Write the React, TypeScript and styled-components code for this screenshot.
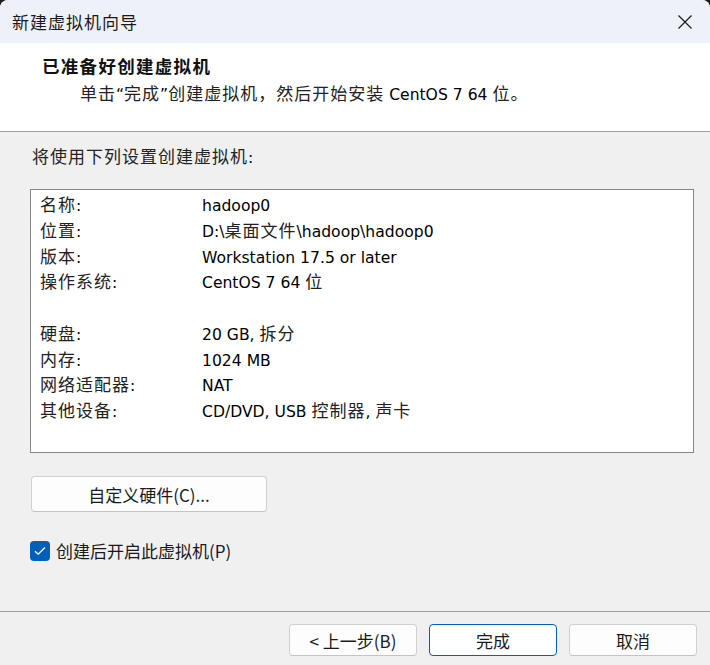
import styled, { createGlobalStyle } from 'styled-components';

const GlobalStyle = createGlobalStyle`
  html, body {
    margin: 0;
    padding: 0;
    background: #1c1c1c;
  }
  * {
    box-sizing: border-box;
  }
`;

const latin = `"DejaVu Sans", "Noto Sans CJK SC", sans-serif`;
const uiFont = `"Noto Sans CJK SC", "Noto Sans", sans-serif`;

const cjkRun = /([\u2E80-\u9FFF\u3000-\u303F\uFF00-\uFFEF]+)/;

// windows renders the CJK parts larger than the tahoma parts, so split them
function Mixed({ text }: { text: string }) {
  return (
    <>
      {text.split(cjkRun).map((part, i) =>
        cjkRun.test(part) ? <Han key={i}>{part}</Han> : part
      )}
    </>
  );
}

const settings: Array<[string, string] | null> = [
  ['名称:', 'hadoop0'],
  ['位置:', 'D:\\桌面文件\\hadoop\\hadoop0'],
  ['版本:', 'Workstation 17.5 or later'],
  ['操作系统:', 'CentOS 7 64 位'],
  null,
  ['硬盘:', '20 GB, 拆分'],
  ['内存:', '1024 MB'],
  ['网络适配器:', 'NAT'],
  ['其他设备:', 'CD/DVD, USB 控制器, 声卡'],
];

export default function App() {
  return (
    <>
      <GlobalStyle />
      <Window>
        <TitleBar>
          <Title>新建虚拟机向导</Title>
          <CloseButton aria-label="关闭">
            <svg width="16" height="16" viewBox="0 0 16 16">
              <path d="M1.5 1.5 L14.5 14.5 M14.5 1.5 L1.5 14.5" stroke="#1b1b1b" strokeWidth="1.2" fill="none" />
            </svg>
          </CloseButton>
        </TitleBar>

        <Header>
          <HeaderTitle>已准备好创建虚拟机</HeaderTitle>
          <HeaderText>
            <Mixed text="单击“完成”创建虚拟机，然后开始安装 CentOS 7 64 位。" />
          </HeaderText>
        </Header>

        <Content>
          <Intro>
            <Mixed text="将使用下列设置创建虚拟机:" />
          </Intro>

          <ListBox>
            {settings.map((row, i) =>
              row ? (
                <Row key={i}>
                  <Label><Mixed text={row[0]} /></Label>
                  <Value><Mixed text={row[1]} /></Value>
                </Row>
              ) : (
                <Row key={i} />
              )
            )}
          </ListBox>

          <HardwareButton>自定义硬件(C)...</HardwareButton>

          <CheckRow>
            <CheckBox>
              <svg width="12" height="10" viewBox="0 0 12 10">
                <path d="M1 5.2 L4.2 8.2 L11 1.5" stroke="#fff" strokeWidth="1.3" fill="none" />
              </svg>
            </CheckBox>
            <CheckLabel>创建后开启此虚拟机(P)</CheckLabel>
          </CheckRow>
        </Content>

        <Footer>
          <DialogButton>&lt; 上一步(B)</DialogButton>
          <DialogButton $primary>完成</DialogButton>
          <DialogButton>取消</DialogButton>
        </Footer>
      </Window>
    </>
  );
}

const Window = styled.div`
  width: 710px;
  height: 665px;
  background: #f0f0f0;
  border-radius: 8px 8px 0 0;
  overflow: hidden;
  display: flex;
  flex-direction: column;
`;

const TitleBar = styled.div`
  height: 43px;
  flex: none;
  background: #eff1f8;
  display: flex;
  align-items: center;
  justify-content: space-between;
  padding-left: 12px;
`;

const Title = styled.div`
  font-family: ${uiFont};
  font-size: 17px;
  letter-spacing: 1px;
  color: #1a1a1a;
`;

const CloseButton = styled.div`
  width: 50px;
  height: 43px;
  display: flex;
  align-items: center;
  justify-content: center;
`;

const Header = styled.div`
  height: 89px;
  flex: none;
  background: #fff;
  border-bottom: 1px solid #a0a0a0;
  padding-top: 11px;
`;

const HeaderTitle = styled.div`
  padding-left: 42px;
  font-family: ${uiFont};
  font-weight: 700;
  font-size: 17.5px;
  letter-spacing: 1.3px;
  line-height: 24px;
  color: #111;
`;

const HeaderText = styled.div`
  padding-left: 80px;
  margin-top: 5px;
  font-family: ${latin};
  font-size: 15.6px;
  line-height: 24px;
  color: #000;
`;

const Han = styled.span`
  font-family: ${uiFont};
  font-size: 17px;
  line-height: 1;
  letter-spacing: 1px;
  color: #222;
`;

const Content = styled.div`
  flex: 1;
  padding: 14px 17px 0 30px;
  display: flex;
  flex-direction: column;
  align-items: flex-start;
`;

const Intro = styled.div`
  padding-left: 2px;
  font-family: ${latin};
  font-size: 15.6px;
  line-height: 24px;
  color: #000;
`;

const ListBox = styled.div`
  margin-top: 19px;
  width: 664px;
  height: 264px;
  background: #fff;
  border: 1px solid #828790;
  padding: 4px 0 0 9px;
`;

const Row = styled.div`
  display: flex;
  height: 25.75px;
  line-height: 25.75px;
  font-family: ${latin};
  font-size: 15.6px;
  color: #000;
  white-space: nowrap;
`;

const Label = styled.div`
  width: 162px;
`;

const Value = styled.div``;

const buttonBase = `
  font-family: ${uiFont};
  font-size: 17px;
  color: #1a1a1a;
  background: #fdfdfd;
  border: 1px solid #d0d0d0;
  border-bottom-color: #c4c4c4;
  border-radius: 4px;
  display: flex;
  align-items: center;
  justify-content: center;
`;

const HardwareButton = styled.div`
  ${buttonBase}
  margin-top: 23px;
  margin-left: 1px;
  width: 236px;
  height: 36px;
`;

const CheckRow = styled.div`
  margin-top: 27px;
  display: flex;
  align-items: center;
  gap: 6px;
`;

const CheckBox = styled.div`
  width: 20px;
  height: 20px;
  border-radius: 4px;
  background: #005fb8;
  display: flex;
  align-items: center;
  justify-content: center;
`;

const CheckLabel = styled.div`
  font-family: ${uiFont};
  font-size: 17px;
  color: #1a1a1a;
  line-height: 24px;
`;

const Footer = styled.div`
  flex: none;
  height: 54px;
  border-top: 1px solid #a0a0a0;
  display: flex;
  justify-content: flex-end;
  align-items: flex-start;
  gap: 12px;
  padding: 12px 13px 0 0;
`;

const DialogButton = styled.div<{ $primary?: boolean }>`
  ${buttonBase}
  width: 128px;
  height: 32px;
  ${p => p.$primary && `
    background: #fff;
    border-color: #005fb8;
  `}
`;
